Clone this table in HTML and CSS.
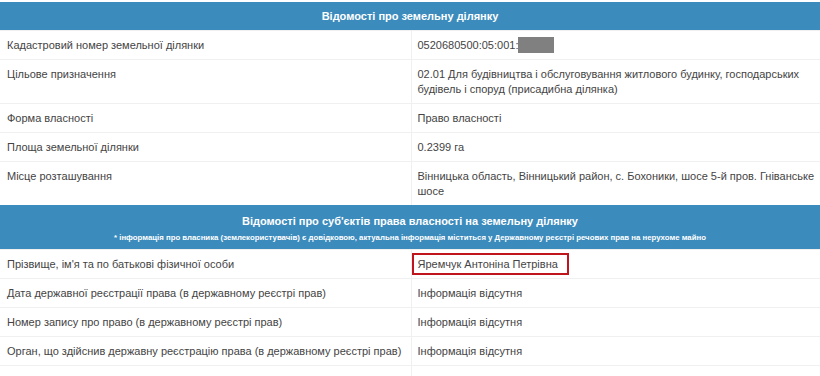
FILE: index.html
```html
<!DOCTYPE html>
<html lang="uk">
<head>
<meta charset="utf-8">
<title>Відомості про земельну ділянку</title>
<link rel="stylesheet" href="styles.css">
</head>
<body>
<div class="page">
  <table class="info">
    <colgroup><col class="c-label"><col class="c-value"></colgroup>
    <tr class="head"><th colspan="2"><div class="title">Відомості про земельну ділянку</div></th></tr>
    <tr><td>Кадастровий номер земельної ділянки</td><td>0520680500:05:001:<span class="masked"></span></td></tr>
    <tr><td>Цільове призначення</td><td>02.01 Для будівництва і обслуговування житлового будинку, господарських будівель і споруд (присадибна ділянка)</td></tr>
    <tr><td>Форма власності</td><td>Право власності</td></tr>
    <tr><td>Площа земельної ділянки</td><td>0.2399 га</td></tr>
    <tr><td>Місце розташування</td><td>Вінницька область, Вінницький район, с. Бохоники, шосе 5-й пров. Гніванське шосе</td></tr>
    <tr class="head head2"><th colspan="2"><div class="title">Відомості про суб'єктів права власності на земельну ділянку</div><div class="note">* інформація про власника (землекористувачів) є довідковою, актуальна інформація міститься у Державному реєстрі речових прав на нерухоме майно</div></th></tr>
    <tr><td>Прізвище, ім'я та по батькові фізичної особи</td><td><span class="mark">Яремчук Антоніна Петрівна</span></td></tr>
    <tr><td>Дата державної реєстрації права (в державному реєстрі прав)</td><td>Інформація відсутня</td></tr>
    <tr><td>Номер запису про право (в державному реєстрі прав)</td><td>Інформація відсутня</td></tr>
    <tr><td>Орган, що здійснив державну реєстрацію права (в державному реєстрі прав)</td><td>Інформація відсутня</td></tr>
    <tr><td>&nbsp;</td><td>&nbsp;</td></tr>
  </table>
</div>
</body>
</html>
```

FILE: styles.css
```css
html, body {
  margin: 0;
  padding: 0;
  background: #fff;
}
.page {
  padding-top: 2px;
  width: 820px;
  height: 374px;
  overflow: hidden;
}
.info {
  width: 820px;
  border-collapse: collapse;
  table-layout: fixed;
  font-family: "Liberation Sans", Arial, sans-serif;
  font-size: 11px;
  color: #444;
}
.c-label { width: 411px; }
.info td {
  padding: 7px 6px 6px 7px;
  line-height: 15px;
  vertical-align: top;
  border-top: 1px solid #f0f0f0;
  border-left: 1px solid #f0f0f0;
}
.info td:first-child { border-left: none; }
.info td + td { padding-left: 6px; padding-right: 0; }
.head th {
  background: #3b8bbd;
  color: #fff;
  padding: 0;
  height: 28px;
  font-weight: bold;
  text-align: center;
}
.head .title {
  font-size: 11px;
  line-height: 16px;
}
.head2 th { height: 44px; }
.head2 .title { padding-top: 2px; }
.note {
  font-size: 7.8px;
  line-height: 12px;
  margin-top: 3px;
}
.masked {
  display: inline-block;
  width: 36px;
  height: 16px;
  background: #808080;
  vertical-align: top;
  margin-top: -1px;
}
.mark {
  display: inline-block;
  border: 2px solid #c0151c;
  margin: -4px 0 -4px -6px;
  padding: 2px 9px 2px 4px;
  line-height: 14px;
}
```
